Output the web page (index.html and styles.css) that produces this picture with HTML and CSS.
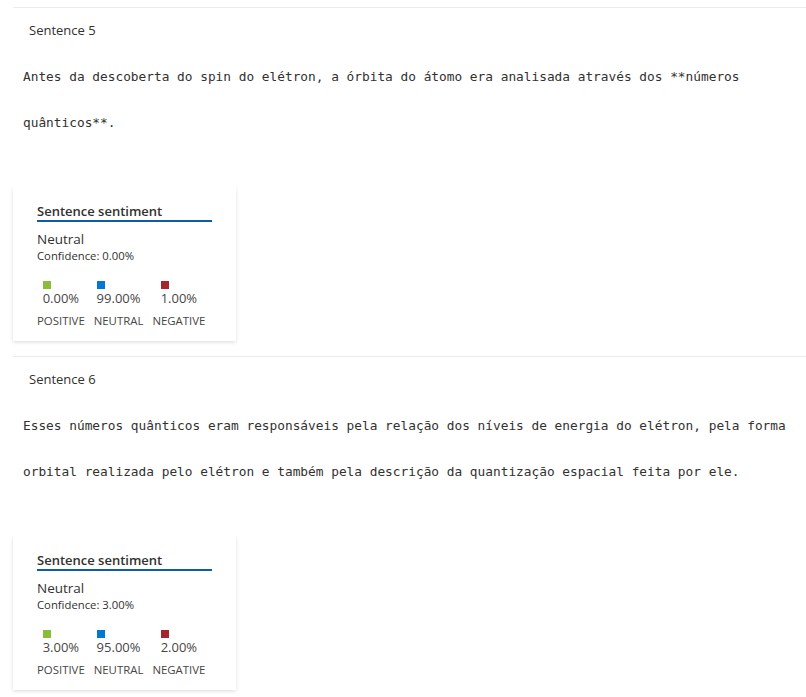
FILE: index.html
```html
<!DOCTYPE html>
<html lang="pt">
<head>
<meta charset="utf-8">
<link rel="stylesheet" href="styles.css">
</head>
<body>
<div class="list">
  <section class="sentence">
    <div class="sentence-label">Sentence 5</div>
    <div class="sentence-text">Antes da descoberta do spin do elétron, a órbita do átomo era analisada através dos **números quânticos**.</div>
    <div class="card">
      <div class="card-title">Sentence sentiment</div>
      <div class="overall">Neutral</div>
      <div class="confidence">Confidence: 0.00%</div>
      <div class="scores">
        <div class="score">
          <div class="score-inner"><span class="swatch positive"></span><span class="pct">0.00%</span></div>
          <div class="score-label">POSITIVE</div>
        </div>
        <div class="score">
          <div class="score-inner"><span class="swatch neutral"></span><span class="pct">99.00%</span></div>
          <div class="score-label">NEUTRAL</div>
        </div>
        <div class="score">
          <div class="score-inner"><span class="swatch negative"></span><span class="pct">1.00%</span></div>
          <div class="score-label">NEGATIVE</div>
        </div>
      </div>
    </div>
  </section>
  <section class="sentence">
    <div class="sentence-label">Sentence 6</div>
    <div class="sentence-text">Esses números quânticos eram responsáveis pela relação dos níveis de energia do elétron, pela forma orbital realizada pelo elétron e também pela descrição da quantização espacial feita por ele.</div>
    <div class="card">
      <div class="card-title">Sentence sentiment</div>
      <div class="overall">Neutral</div>
      <div class="confidence">Confidence: 3.00%</div>
      <div class="scores">
        <div class="score">
          <div class="score-inner"><span class="swatch positive"></span><span class="pct">3.00%</span></div>
          <div class="score-label">POSITIVE</div>
        </div>
        <div class="score">
          <div class="score-inner"><span class="swatch neutral"></span><span class="pct">95.00%</span></div>
          <div class="score-label">NEUTRAL</div>
        </div>
        <div class="score">
          <div class="score-inner"><span class="swatch negative"></span><span class="pct">2.00%</span></div>
          <div class="score-label">NEGATIVE</div>
        </div>
      </div>
    </div>
  </section>
</div>
</body>
</html>
```
FILE: styles.css
```css
html, body {
  margin: 0;
  padding: 0;
  background: #ffffff;
}
body {
  font-family: "Open Sans", "Noto Sans", sans-serif;
  color: #323130;
}
.list {
  padding: 7px 0 0 13px;
}
.sentence {
  border-top: 1px solid #edebe9;
  padding-bottom: 15px;
}
.sentence-label {
  margin: 13px 0 0 16px;
  font-size: 13px;
  line-height: 18px;
  color: #323130;
}
.sentence-text {
  margin: 15px 8px 0 10px;
  font-family: "DejaVu Sans Mono", "Liberation Mono", monospace;
  font-size: 12.8px;
  line-height: 46px;
  color: #323130;
}
.card {
  margin-top: 41px;
  width: 223px;
  height: 154px;
  box-sizing: border-box;
  padding: 15px 24px 0;
  background: #fff;
  box-shadow: 0 1.6px 3.6px rgba(0, 0, 0, 0.13), 0 0.3px 0.9px rgba(0, 0, 0, 0.11);
}
.card-title {
  width: 175px;
  font-size: 13px;
  font-weight: 600;
  line-height: 18px;
  border-bottom: 2px solid #0f5ca3;
}
.overall {
  margin-top: 8px;
  font-size: 13.5px;
  line-height: 18px;
}
.confidence {
  font-size: 11.3px;
  line-height: 16px;
}
.scores {
  display: flex;
  gap: 9px;
  margin-top: 17px;
}
.score {
  display: flex;
  flex-direction: column;
  align-items: center;
}
.score-inner {
  display: flex;
  flex-direction: column;
  align-items: flex-start;
}
.swatch {
  display: block;
  width: 8px;
  height: 8px;
}
.swatch.positive { background: #8cbd3a; }
.swatch.neutral { background: #0078d4; }
.swatch.negative { background: #a4262c; }
.pct {
  font-size: 13px;
  line-height: 18px;
  color: #484644;
}
.score-label {
  margin-top: 6px;
  font-size: 11.4px;
  line-height: 16px;
  color: #484644;
}
```
